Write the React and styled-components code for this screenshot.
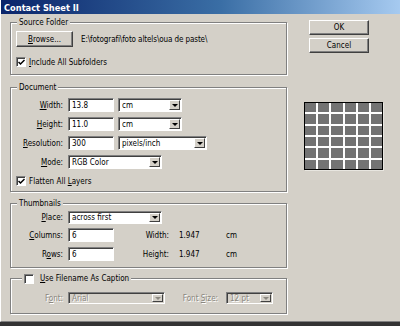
import styled, { createGlobalStyle } from "styled-components";

const Global = createGlobalStyle`
  html, body {
    margin: 0;
    padding: 0;
    background: #333333;
  }
  body {
    font-family: "DejaVu Sans Condensed", "Liberation Sans", Arial, sans-serif;
    font-size: 8px;
    color: #000;
  }
`;

const Window = styled.div`
  width: 400px;
  height: 322px;
  box-sizing: border-box;
  background: #d4d0c8;
  border-bottom: 1px solid #808080;
  border-left: 1px solid #ffffff;
  display: flex;
  flex-direction: column;
`;

const TitleBar = styled.div`
  height: 14px;
  padding-left: 3px;
  display: flex;
  align-items: center;
  background: linear-gradient(to right, #0a246a 0%, #3a6ea5 55%, #a6caf0 100%);
  color: #fff;
  font-weight: bold;
  font-size: 9.2px;
`;

const Body = styled.div`
  display: flex;
  padding: 6px 0 0 9px;
`;

const LeftCol = styled.div`
  width: 277px;
  padding-top: 2px;
  display: flex;
  flex-direction: column;
`;

const RightCol = styled.div`
  width: 79px;
  margin-left: 17px;
  display: flex;
  flex-direction: column;
`;

const Group = styled.div`
  position: relative;
  border: 1px solid #808080;
  box-shadow: inset 1px 1px 0 #fff, 1px 1px 0 #fff;
  margin-top: ${(p) => p.$mt || 0}px;
  padding: ${(p) => p.$pad};
  display: flex;
  flex-direction: column;
`;

const Legend = styled.div`
  position: absolute;
  top: -6px;
  left: ${(p) => p.$left || 6}px;
  padding: 0 2px;
  background: #d4d0c8;
  line-height: 11px;
  font-size: 8px;
  display: flex;
  align-items: center;
  gap: 3px;
`;

const Row = styled.div`
  display: flex;
  align-items: center;
  height: ${(p) => p.$h || 14}px;
  margin-top: ${(p) => p.$mt || 0}px;
`;

const Label = styled.span`
  width: ${(p) => p.$w || 47}px;
  margin-left: ${(p) => p.$ml || 0}px;
  margin-right: 5px;
  text-align: right;
  white-space: nowrap;
  color: ${(p) => (p.$disabled ? "#8a8780" : "#000")};
  text-shadow: ${(p) => (p.$disabled ? "1px 1px 0 #fff" : "none")};
`;

const Text = styled.span`
  width: ${(p) => (p.$w ? `${p.$w}px` : "auto")};
  margin-left: ${(p) => p.$ml || 0}px;
  letter-spacing: ${(p) => p.$ls || 0}px;
  white-space: nowrap;
`;

const Button = styled.button`
  width: ${(p) => p.$w}px;
  height: ${(p) => p.$h}px;
  margin-left: ${(p) => p.$ml || 0}px;
  margin-top: ${(p) => p.$mt || 0}px;
  padding: 0;
  box-sizing: border-box;
  background: #d4d0c8;
  border: 1px solid;
  border-color: #fff #404040 #404040 #fff;
  box-shadow: inset -1px -1px 0 #808080;
  font: inherit;
  color: #000;
  flex-shrink: 0;
`;

const Input = styled.input`
  width: ${(p) => p.$w || 46}px;
  height: 14px;
  box-sizing: border-box;
  margin: 0;
  padding: 0 3px;
  border: 1px solid;
  border-color: #808080 #fff #fff #808080;
  box-shadow: inset 1px 1px 0 #404040;
  background: #fff;
  font: inherit;
  color: #000;
  outline: none;
`;

const Select = styled.div`
  width: ${(p) => p.$w}px;
  height: ${(p) => p.$h || 14}px;
  margin-left: ${(p) => p.$ml || 0}px;
  box-sizing: border-box;
  border: 1px solid;
  border-color: #808080 #fff #fff #808080;
  box-shadow: inset 1px 1px 0 #404040;
  background: ${(p) => (p.$disabled ? "#d4d0c8" : "#fff")};
  color: ${(p) => (p.$disabled ? "#8a8780" : "#000")};
  text-shadow: ${(p) => (p.$disabled ? "1px 1px 0 #fff" : "none")};
  display: flex;
  align-items: center;
  padding: 1px 1px 1px 3px;
  flex-shrink: 0;
`;

const SelectValue = styled.span`
  flex: 1;
  white-space: nowrap;
  overflow: hidden;
`;

const ArrowBox = styled.span`
  width: 11px;
  height: 100%;
  box-sizing: border-box;
  background: #d4d0c8;
  border: 1px solid;
  border-color: #fff #404040 #404040 #fff;
  display: flex;
  align-items: center;
  justify-content: center;

  &::after {
    content: "";
    border-left: 3px solid transparent;
    border-right: 3px solid transparent;
    border-top: 3px solid ${(p) => (p.$disabled ? "#8a8780" : "#000")};
  }
`;

const Check = styled.span`
  width: 10px;
  height: 10px;
  box-sizing: border-box;
  border: 1px solid;
  border-color: #808080 #fff #fff #808080;
  box-shadow: inset 1px 1px 0 #404040;
  background: #fff;
  display: flex;
  align-items: center;
  justify-content: center;
  margin-right: 3px;
  flex-shrink: 0;
`;

const Preview = styled.div`
  width: 79px;
  height: 68px;
  margin-top: 49px;
  box-sizing: border-box;
  border: 1px solid #000;
  background: #fff;
  display: grid;
  grid-template-columns: repeat(6, 1fr);
  grid-template-rows: repeat(6, 1fr);
  gap: 2px;
  box-shadow: 1px 1px 0 #e8e6e0;
`;

const Cell = styled.span`
  background: #737373;
`;

function Checkbox({ checked }) {
  return (
    <Check>
      {checked && (
        <svg width="7" height="7" viewBox="0 0 7 7">
          <path d="M0.5 3 L2.5 5 L6.5 1" stroke="#000" strokeWidth="1.5" fill="none" />
        </svg>
      )}
    </Check>
  );
}

function Dropdown({ value, w, h, ml, disabled }) {
  return (
    <Select $w={w} $h={h} $ml={ml} $disabled={disabled}>
      <SelectValue>{value}</SelectValue>
      <ArrowBox $disabled={disabled} />
    </Select>
  );
}

export default function App() {
  return (
    <>
      <Global />
      <Window>
        <TitleBar>Contact Sheet II</TitleBar>
        <Body>
          <LeftCol>
            <Group $pad="8px 5px 7px">
              <Legend $left={6}>Source Folder</Legend>
              <Row $h={16}>
                <Button $w={57} $h={16}>
                  <u>B</u>rowse...
                </Button>
                <Text $ml={8} $ls={-0.1}>
                  E:\fotografi\foto altels\oua de paste\
                </Text>
              </Row>
              <Row $h={10} $mt={10}>
                <Checkbox checked />
                <Text>
                  <u>I</u>nclude All Subfolders
                </Text>
              </Row>
            </Group>

            <Group $mt={12} $pad="10px 5px 5px">
              <Legend>Document</Legend>
              <Row>
                <Label>
                  <u>W</u>idth:
                </Label>
                <Input defaultValue="13.8" readOnly />
                <Dropdown value="cm" w={64} ml={4} />
              </Row>
              <Row $mt={5}>
                <Label>
                  <u>H</u>eight:
                </Label>
                <Input defaultValue="11.0" readOnly />
                <Dropdown value="cm" w={64} ml={4} />
              </Row>
              <Row $mt={5}>
                <Label>
                  <u>R</u>esolution:
                </Label>
                <Input defaultValue="300" readOnly />
                <Dropdown value="pixels/inch" w={89} ml={4} />
              </Row>
              <Row $mt={5}>
                <Label>
                  <u>M</u>ode:
                </Label>
                <Dropdown value="RGB Color" w={94} />
              </Row>
              <Row $h={10} $mt={7}>
                <Checkbox checked />
                <Text>
                  Flatten All <u>L</u>ayers
                </Text>
              </Row>
            </Group>

            <Group $mt={11} $pad="7px 5px 6px">
              <Legend>Thumbnails</Legend>
              <Row $h={13}>
                <Label>
                  <u>P</u>lace:
                </Label>
                <Dropdown value="across first" w={94} h={13} />
              </Row>
              <Row $mt={4}>
                <Label>
                  <u>C</u>olumns:
                </Label>
                <Input defaultValue="6" readOnly />
                <Label $w={49} $ml={6}>
                  Width:
                </Label>
                <Text $w={47} $ml={5}>1.947</Text>
                <Text>cm</Text>
              </Row>
              <Row $mt={5}>
                <Label>
                  R<u>o</u>ws:
                </Label>
                <Input defaultValue="6" readOnly />
                <Label $w={49} $ml={6}>
                  Height:
                </Label>
                <Text $w={47} $ml={5}>1.947</Text>
                <Text>cm</Text>
              </Row>
            </Group>

            <Group $mt={10} $pad="13px 5px 9px">
              <Legend $left={11}>
                <Checkbox />
                <span>
                  <u>U</u>se Filename As Caption
                </span>
              </Legend>
              <Row $h={12}>
                <Label $disabled>
                  F<u>o</u>nt:
                </Label>
                <Dropdown value="Arial" w={97} h={12} disabled />
                <Label $w={48} $ml={5} $disabled>
                  Font <u>S</u>ize:
                </Label>
                <Dropdown value="12 pt" w={47} h={12} ml={3} disabled />
              </Row>
            </Group>
          </LeftCol>

          <RightCol>
            <Button $w={60} $h={15} $ml={5}>
              OK
            </Button>
            <Button $w={60} $h={15} $ml={5} $mt={3}>
              Cancel
            </Button>
            <Preview>
              {Array.from({ length: 36 }, (_, i) => (
                <Cell key={i} />
              ))}
            </Preview>
          </RightCol>
        </Body>
      </Window>
    </>
  );
}
